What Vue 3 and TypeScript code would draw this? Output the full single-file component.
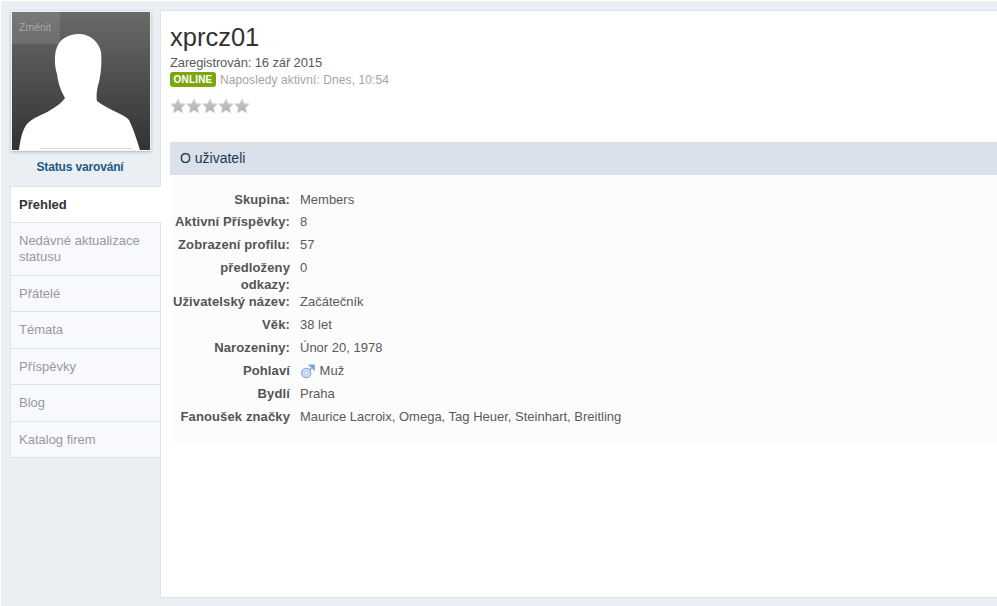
<script setup lang="ts">
const tabs: string[] = ['Nedávné aktualizace statusu', 'Přátelé', 'Témata', 'Příspěvky', 'Blog', 'Katalog firem']
const rows: { label: string; value: string; icon?: boolean }[] = [
  { label: 'Skupina:', value: 'Members' },
  { label: 'Aktivní Příspěvky:', value: '8' },
  { label: 'Zobrazení profilu:', value: '57' },
  { label: 'předloženy odkazy:', value: '0' },
  { label: 'Uživatelský název:', value: 'Začátečník' },
  { label: 'Věk:', value: '38 let' },
  { label: 'Narozeniny:', value: 'Únor 20, 1978' },
  { label: 'Pohlaví', value: 'Muž', icon: true },
  { label: 'Bydlí', value: 'Praha' },
  { label: 'Fanoušek značky', value: 'Maurice Lacroix, Omega, Tag Heuer, Steinhart, Breitling' },
]
</script>

<template>
  <div class="page">
    <aside class="side">
      <div class="avatar">
        <svg class="avatar-art" width="138" height="138" viewBox="0 0 138 138">
          <defs>
            <linearGradient id="avbg" x1="0" y1="0" x2="0" y2="1">
              <stop offset="0" stop-color="#6a6a69" />
              <stop offset="1" stop-color="#323232" />
            </linearGradient>
            <linearGradient id="star" x1="0" y1="0" x2="0" y2="1">
              <stop offset="0" stop-color="#cdcdcd" />
              <stop offset="1" stop-color="#adadad" />
            </linearGradient>
          </defs>
          <rect width="138" height="138" fill="url(#avbg)" />
          <path
            fill="#fff"
            d="M67 22 C56 22 47 27 44 38 C42 46 43 56 45 62 C46 70 48 78 53 86 C49 92 43 95 37 99 C30 103 22 105 15 112 C10 118 8 130 7 138 L128 138 C125 128 121 116 117 108 C112 102 97 98 85 89 C84 84 85 76 87 70 C89 62 90 50 89 40 C87 30 78 22 67 22 Z"
          />
          <rect x="28" y="136" width="92" height="1" fill="#d8d8d8" />
        </svg>
        <span class="change">Změnit</span>
      </div>
      <p class="warn">Status varování</p>
      <nav class="tabs">
        <a class="tab active">Přehled</a>
        <a v-for="t in tabs" :key="t" class="tab">{{ t }}</a>
      </nav>
    </aside>
    <main class="panel">
      <h1 class="name">xprcz01</h1>
      <div class="joined">Zaregistrován: 16 zář 2015</div>
      <div class="status">
        <span class="badge">ONLINE</span>
        <span class="last">Naposledy aktivní: Dnes, 10:54</span>
      </div>
      <div class="stars">
        <svg v-for="n in 5" :key="n" width="16" height="16" viewBox="0 0 16 16">
          <path
            d="M8 .8 10.2 5.5 15.4 6.1 11.6 9.7 12.6 15 8 12.3 3.4 15 4.4 9.7 .6 6.1 5.8 5.5Z"
            fill="url(#star)"
            stroke="#d9d9d9"
            stroke-width=".8"
          />
        </svg>
      </div>
      <section class="about">
        <h2 class="about-head">O uživateli</h2>
        <div class="about-body">
          <div v-for="r in rows" :key="r.label" class="row">
            <div class="label">{{ r.label }}</div>
            <div class="value">
              <svg v-if="r.icon" class="gender" width="16" height="16" viewBox="0 0 16 16">
                <circle cx="6.2" cy="10" r="4.6" fill="#cfdff4" stroke="#8fb1e0" stroke-width="1.3" />
                <circle cx="6.2" cy="10" r="1.7" fill="#fff" stroke="#9dbbe4" stroke-width=".8" />
                <path d="M9.5 6.8 13 3.2M9.8 2.2H14V6.4Z" fill="#7ba5e0" stroke="#7ba5e0" stroke-width="1.6" />
              </svg>
              {{ r.value }}
            </div>
          </div>
        </div>
      </section>
    </main>
  </div>
</template>

<style scoped>
.page {
  box-sizing: border-box;
  width: 996px;
  height: 605px;
  margin: 1px 0 0 1px;
  padding: 9px 0 8px 9px;
  display: flex;
  background: #e9eff2;
  font-family: "Liberation Sans", Arial, sans-serif;
  font-size: 13px;
  color: #5a5a5a;
  overflow: hidden;
}
.side {
  width: 150px;
  flex: none;
}
.avatar {
  position: relative;
  box-sizing: border-box;
  width: 140px;
  height: 140px;
  margin: 1px 0 0 1px;
  border: 1px solid #f4f4f4;
  box-shadow: 0 1px 3px rgba(0, 0, 0, 0.25);
}
.avatar-art {
  display: block;
}
.change {
  position: absolute;
  left: -1px;
  top: -1px;
  box-sizing: border-box;
  width: 49px;
  height: 33px;
  padding: 10px 0 0 8px;
  background: rgba(255, 255, 255, 0.1);
  color: #a8a8a8;
  font-size: 10.5px;
  line-height: 13px;
}
.warn {
  width: 140px;
  margin: 9px 0 0;
  height: 26px;
  line-height: 15px;
  text-align: center;
  font-size: 12px;
  font-weight: bold;
  letter-spacing: -0.15px;
  color: #225985;
}
.tabs {
  display: flex;
  flex-direction: column;
}
.tab {
  display: block;
  box-sizing: border-box;
  padding: 10px 8px 9.5px;
  margin-right: -1px;
  line-height: 16px;
  background: #f7f9fc;
  border: 1px solid #dbe4ef;
  border-top: 0;
  color: #9a9a9a;
  font-size: 13px;
  position: relative;
  z-index: 1;
}
.tab.active {
  background: #fff;
  color: #333;
  font-weight: bold;
  border-top: 1px solid #dbe4ef;
  border-right-color: #fff;
  padding: 10px 8px 9px;
}
.panel {
  flex: 1;
  min-width: 0;
  box-sizing: border-box;
  background: #fff;
  border: 1px solid #dbe4ef;
  border-right: 0;
  padding: 10px 0 0 9px;
}
.name {
  margin: 0;
  font-size: 25.5px;
  font-weight: normal;
  line-height: 32px;
  color: #323232;
}
.joined {
  margin-top: 2px;
  line-height: 15px;
  letter-spacing: -0.13px;
  color: #5a5a5a;
}
.status {
  display: flex;
  align-items: center;
  gap: 4px;
  height: 15px;
  margin-top: 2px;
}
.badge {
  box-sizing: border-box;
  width: 46px;
  height: 15px;
  border-radius: 3px;
  background: #7ba60d;
  color: #fff;
  font-size: 10px;
  font-weight: bold;
  line-height: 15px;
  text-align: center;
  letter-spacing: 0.2px;
}
.last {
  color: #a4a4a4;
  font-size: 12px;
  letter-spacing: 0.1px;
}
.stars {
  display: flex;
  height: 16px;
  margin-top: 11px;
}
.about {
  margin-top: 28px;
}
.about-head {
  margin: 0;
  height: 33px;
  padding-left: 10px;
  background: #dbe1ea;
  color: #1d3652;
  font-size: 14px;
  font-weight: normal;
  line-height: 33px;
}
.about-body {
  box-sizing: border-box;
  height: 271px;
  padding-top: 15.52px;
  background: #fcfcfc;
}
.row {
  display: flex;
}
.label {
  box-sizing: border-box;
  width: 120px;
  flex: none;
  text-align: right;
  font-weight: bold;
  line-height: 17px;
  letter-spacing: 0.12px;
  color: #545454;
}
.value {
  margin-left: 10px;
  padding-bottom: 5.95px;
  line-height: 17px;
}
.gender {
  display: inline-block;
  vertical-align: -4px;
}
</style>

<style>
html, body {
  margin: 0;
  background: #fff;
}
</style>
